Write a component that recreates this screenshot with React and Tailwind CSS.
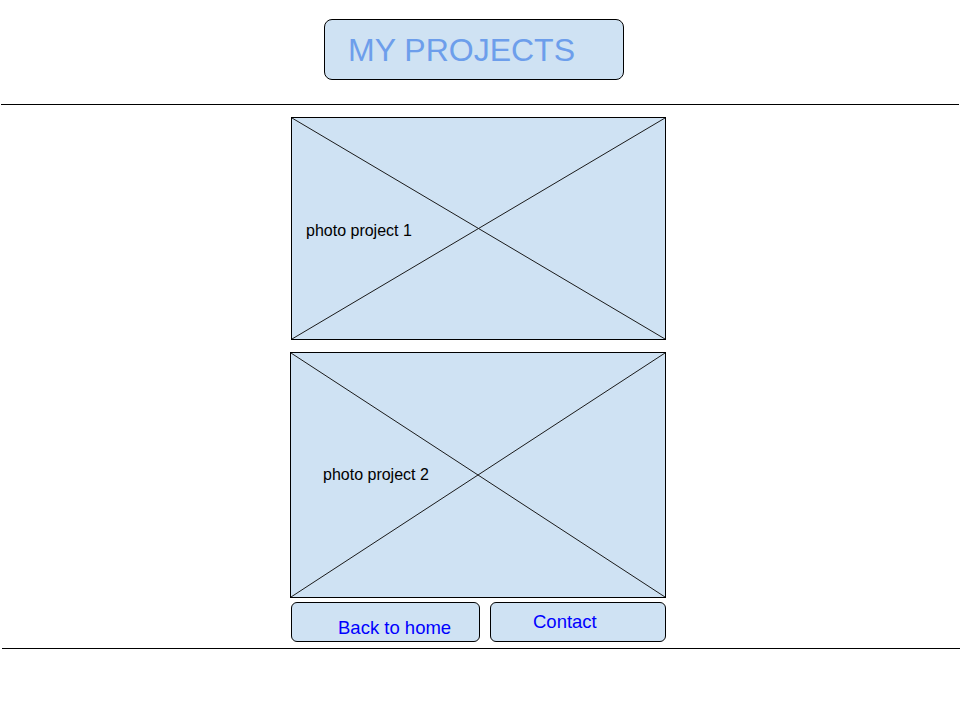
function Placeholder({ label, className, labelClass }) {
  return (
    <div className={`relative border border-black bg-[#cfe2f3] ${className}`}>
      <svg className="absolute inset-0 w-full h-full" viewBox="0 0 100 100" preserveAspectRatio="none">
        <line x1="0" y1="0" x2="100" y2="100" stroke="#1a1a1a" strokeWidth="1" vectorEffect="non-scaling-stroke" />
        <line x1="0" y1="100" x2="100" y2="0" stroke="#1a1a1a" strokeWidth="1" vectorEffect="non-scaling-stroke" />
      </svg>
      <div className={`relative flex h-full items-center text-[16px] text-black ${labelClass}`}>{label}</div>
    </div>
  );
}

export default function App() {
  return (
    <div className="w-[960px] h-[720px] bg-white font-['Liberation_Sans',Arial,sans-serif]">
      <div className="pt-[19px] pl-[324px]">
        <div className="flex h-[61px] w-[300px] items-center rounded-lg border border-black bg-[#cfe2f3] pl-[23px] text-[32px] leading-none text-[#6d9eeb]">
          MY PROJECTS
        </div>
      </div>

      <div className="mt-[24px] ml-[1px] w-[958px] border-t border-black" />

      <div className="ml-[290px] flex w-[376px] flex-col">
        <Placeholder label="photo project 1" className="mt-[12px] ml-px h-[223px] w-[375px]" labelClass="pl-[14px] pt-[4px]" />
        <Placeholder label="photo project 2" className="mt-[12px] h-[246px] w-[376px]" labelClass="pl-[32px]" />

        <div className="mt-[4px] ml-px flex gap-[10px]">
          <button className="h-[40px] w-[189px] rounded-md border border-black bg-[#cfe2f3] pl-[46px] pt-[12px] text-left text-[18.5px] leading-none text-[#0000ff]">
            Back to home
          </button>
          <button className="h-[40px] w-[176px] rounded-md border border-black bg-[#cfe2f3] pl-[42px] pt-[1px] text-left text-[18.5px] leading-none text-[#0000ff]">
            Contact
          </button>
        </div>
      </div>

      <div className="mt-[6px] ml-[2px] w-[958px] border-t border-black" />
    </div>
  );
}
